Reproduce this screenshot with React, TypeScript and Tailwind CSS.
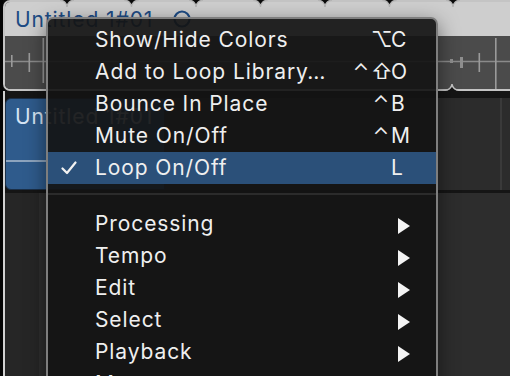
import React from 'react';

type Item = { label: string; mods?: string[]; keyChar?: string; checked?: boolean; sub?: boolean };

const topItems: Item[] = [
  { label: 'Show/Hide Colors', mods: ['⌥'], keyChar: 'C' },
  { label: 'Add to Loop Library…', mods: ['⌃', '⇧'], keyChar: 'O' },
  { label: 'Bounce In Place', mods: ['⌃'], keyChar: 'B' },
  { label: 'Mute On/Off', mods: ['⌃'], keyChar: 'M' },
  { label: 'Loop On/Off', mods: [], keyChar: 'L', checked: true },
];

const subItems: Item[] = ['Processing', 'Tempo', 'Edit', 'Select', 'Playback', 'Move'].map((l) => ({
  label: l,
  sub: true,
}));

const notchXs = [67, 131.5, 196, 260.5, 325, 389.5, 453, 517.5];

function Row({ item }: { item: Item }) {
  return (
    <div
      className={`relative flex h-[32px] items-center ${item.checked ? 'bg-[#2b5079]' : ''}`}
    >
      {item.checked && (
        <svg width="16" height="14" viewBox="0 0 16 14" className="absolute left-[13px] top-[9px]">
          <path
            d="M1.5 7.5 L6 12 L14.5 1.5"
            fill="none"
            stroke="#f2f2f2"
            strokeWidth="2.2"
            strokeLinecap="round"
            strokeLinejoin="round"
          />
        </svg>
      )}
      <div className="flex-1 pl-[47px] text-[21px] leading-[26px] tracking-[0.9px] text-[#efefef]">
        {item.label}
      </div>
      <div className="flex items-center pr-[25px] text-[21px] leading-[26px] text-[#efefef]">
        {item.mods?.map((m, i) => (
          <div key={i} className="w-[20px] text-center">
            {m}
          </div>
        ))}
        {item.sub ? (
          <div className="flex w-[20px] pl-[7px] pt-[4px]">
            <svg width="12" height="16" viewBox="0 0 12 16">
              <polygon points="0,0 12,8 0,16" fill="#f4f4f4" />
            </svg>
          </div>
        ) : (
          <div className="w-[20px] text-left">{item.keyChar}</div>
        )}
      </div>
    </div>
  );
}

export default function App() {
  return (
    <div className="relative flex h-[376px] w-[510px] overflow-hidden bg-[#050505] font-['Inter','DejaVu_Sans',sans-serif]">
      {/* left black strip */}
      <div className="w-[3px] shrink-0" />
      <div className="flex min-w-0 flex-1 flex-col">
        {/* top region (loop tiles) */}
        <div className="relative h-[91px] shrink-0 bg-[#0b0b0b]">
          <div className="flex h-full w-[530px] flex-col overflow-hidden rounded-[7px] border-2 border-[#c4c4c4]">
            <div className="flex h-[34px] shrink-0 items-start bg-[#cecece] pl-[10px] pt-[5px]">
              <span className="text-[21px] leading-[25px] tracking-[0.9px] text-[#1d4b84]">Untitled 1#01</span>
              <svg width="20" height="20" viewBox="0 0 20 20" className="ml-[19px] mt-[3px]">
                <circle cx="10" cy="9" r="7.5" fill="none" stroke="#1d4b84" strokeWidth="2.2" />
              </svg>
            </div>
            <div className="flex-1 bg-[#4b4b4b]" />
          </div>
          {/* notches + ruler marks drawing */}
          <svg width="510" height="91" className="absolute left-[-3px] top-0" viewBox="0 0 510 91">
            {notchXs.map((b) => (
              <g key={b}>
                <path d={`M ${b - 7} 0 A 7 7 0 0 1 ${b} 7 A 7 7 0 0 1 ${b + 7} 0 Z`} fill="#0b0b0b" />
                <path
                  d={`M ${b - 7} 0.5 A 6.5 6.5 0 0 1 ${b} 7 A 6.5 6.5 0 0 1 ${b + 7} 0.5`}
                  fill="none"
                  stroke="#b5b5b5"
                  strokeWidth="1.2"
                />
              </g>
            ))}
            <path d="M 445 91 A 7 7 0 0 0 452 84 A 7 7 0 0 0 459 91 Z" fill="#141414" />
            <path d="M 445 90 A 6.5 6.5 0 0 0 452 84 A 6.5 6.5 0 0 0 459 90" fill="none" stroke="#c4c4c4" strokeWidth="1.5" />
            <line x1="5" y1="61.5" x2="510" y2="61.5" stroke="#8a8a8a" strokeWidth="1.5" />
            <rect x="11" y="55" width="1.6" height="12" fill="#9a9a9a" />
            <rect x="28.5" y="53" width="1.6" height="19" fill="#9a9a9a" />
            <rect x="42.5" y="38" width="1.6" height="45" fill="#9a9a9a" />
            <rect x="450" y="59" width="3" height="4" fill="#8e8e8e" />
            <rect x="460" y="57" width="3" height="11" fill="#8e8e8e" />
            <rect x="478.5" y="53" width="1.6" height="19" fill="#9a9a9a" />
            <rect x="495" y="38" width="1.6" height="51" fill="#9a9a9a" />
          </svg>
        </div>

        {/* lane 2 */}
        <div className="relative flex h-[102px] shrink-0 flex-col border-l-2 border-[#d2d2d2] bg-[#151515] pt-[7px] pb-[3px]">
          <div className="flex flex-1">
            <div className="relative w-[160px] shrink-0 rounded-l-[6px] border border-[#1b2f47] bg-[#2f5b8c] pl-[9px] pt-[5px]">
              <span className="text-[21px] leading-[25px] tracking-[0.9px] text-[#d6e4f4]">Untitled 1#01</span>
              <div className="absolute left-0 right-0 top-[61px] h-[2px] bg-[#8da4be]" />
            </div>
            <div className="relative flex-1 bg-[#2c2c2c]">
              <div className="absolute left-[335px] top-0 h-full w-[2px] bg-[#3a3a3a]" />
            </div>
          </div>
        </div>

        {/* lane 3 */}
        <div className="flex flex-1 border-l-2 border-[#d2d2d2] bg-[#2d2d2d]">
          <div className="w-[34px] bg-[#262626]" />
          <div className="w-[6px] bg-[#2e2e2e]" />
        </div>
      </div>

      {/* context menu */}
      <div className="absolute left-[46px] top-[17px] h-[400px] w-[392px] rounded-[7px] border-2 border-[#7e7e7e] bg-[rgba(20,20,20,0.92)] pt-[5px] shadow-[0_6px_20px_rgba(0,0,0,0.5)]">
        {topItems.map((it) => (
          <Row key={it.label} item={it} />
        ))}
        <div className="h-[24px] pt-[9px]">
          <div className="h-[2px] bg-[#2b2b2b]" />
        </div>
        {subItems.map((it) => (
          <Row key={it.label} item={it} />
        ))}
      </div>
    </div>
  );
}
